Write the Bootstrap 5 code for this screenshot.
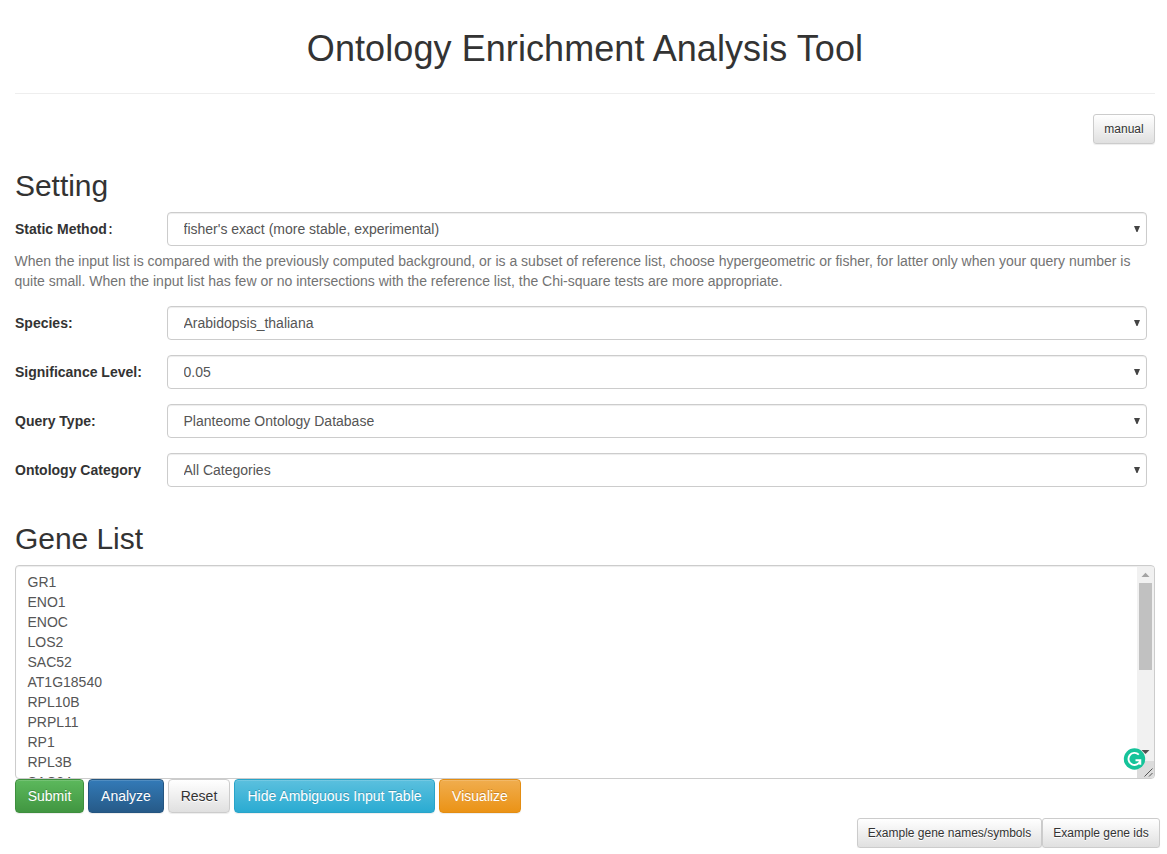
<!DOCTYPE html>
<html lang="en">
<head>
<meta charset="utf-8">
<title>Ontology Enrichment Analysis Tool</title>
<link href="https://cdn.jsdelivr.net/npm/bootstrap@5.3.0/dist/css/bootstrap.min.css" rel="stylesheet">
<style>
body{font-family:"Liberation Sans","Noto Sans CJK SC",sans-serif;font-size:14px;line-height:20px;color:#333;overflow:hidden}
.page{width:1140px;margin-left:15px}
.page-title{font-size:36px;line-height:40px;letter-spacing:.08px;padding:29px 0 24px;border-bottom:1px solid #eee;margin:0 0 20px}
.section-title{font-size:30px;line-height:33px;margin:25px 0 10px;letter-spacing:-.05px}
.section-title.genes{margin-top:35px}
.setting-row{height:34px;margin-bottom:15px}
.setting-row label{width:152px;font-weight:700}
.wide-colon{font-size:11px;line-height:1;margin-left:1px}
.setting-row .form-select{width:980px;height:34px;padding:6px 15.5px;font-size:14px;line-height:20px;color:#555;border:1px solid #ccc;border-radius:4px;box-shadow:inset 0 1px 1px rgba(0,0,0,.075);background:#fff url("data:image/svg+xml,%3Csvg xmlns='http://www.w3.org/2000/svg' width='6' height='6'%3E%3Cpath d='M0 0h6L3.5 6h-1z' fill='%23444'/%3E%3C/svg%3E") no-repeat right 6px top 13px;background-size:6px 6px}
.hint{color:#737373;margin:-10px 0 15px -.5px}
.gene-box{height:214px;border:1px solid #ccc;border-radius:4px;box-shadow:inset 0 1px 1px rgba(0,0,0,.075);overflow:hidden}
.gene-text{padding:6px 11.5px;color:#555;white-space:pre;height:212px;overflow:hidden}
.overlay-svg{position:absolute;right:0;top:0}
.btn{font-size:14px;line-height:20px;padding:6px 0;border-radius:4px;text-shadow:0 -1px 0 rgba(0,0,0,.2);box-shadow:inset 0 1px 0 rgba(255,255,255,.15),0 1px 1px rgba(0,0,0,.075)}
.btn-sm{font-size:12px;line-height:18px;padding:5px 0;border-radius:3px}
.btn-success{background:linear-gradient(#5cb85c,#419641);border-color:#3e8f3e}
.btn-primary{background:linear-gradient(#337ab7,#265a88);border-color:#245580}
.btn-light{background:linear-gradient(#fff,#e0e0e0);border-color:#ccc;color:#333;text-shadow:0 1px 0 #fff}
.btn-info{background:linear-gradient(#5bc0de,#2aabd2);border-color:#28a4c9;color:#fff}
.btn-warning{background:linear-gradient(#f0ad4e,#eb9316);border-color:#e38d13;color:#fff}
.w-submit{width:69px}.w-analyze{width:76px}.w-reset{width:62px}.w-hide{width:201px}.w-vis{width:82px}
.w-manual{width:62px}.w-names{width:185px}.w-ids{width:118px}
.examples{margin:5px -5px 0 0}
</style>
</head>
<body>
<main class="page">
<h1 class="page-title text-center fw-normal">Ontology Enrichment Analysis Tool</h1>
<div class="d-flex justify-content-end"><button class="btn btn-light btn-sm w-manual">manual</button></div>
<h2 class="section-title fw-normal">Setting</h2>
<div class="setting-row d-flex align-items-center"><label for="method">Static Method<span class="wide-colon">：</span></label><select id="method" class="form-select"><option>fisher's exact (more stable, experimental)</option></select></div>
<p class="hint">When the input list is compared with the previously computed background, or is a subset of reference list, choose hypergeometric or fisher, for latter only when your query number is<br>quite small. When the input list has few or no intersections with the reference list, the Chi-square tests are more appropriate.</p>
<div class="setting-row d-flex align-items-center"><label for="species">Species:</label><select id="species" class="form-select"><option>Arabidopsis_thaliana</option></select></div>
<div class="setting-row d-flex align-items-center"><label for="level">Significance Level:</label><select id="level" class="form-select"><option>0.05</option></select></div>
<div class="setting-row d-flex align-items-center"><label for="query">Query Type:</label><select id="query" class="form-select"><option>Planteome Ontology Database</option></select></div>
<div class="setting-row d-flex align-items-center"><label for="category">Ontology Category</label><select id="category" class="form-select"><option>All Categories</option></select></div>
<h2 class="section-title genes fw-normal">Gene List</h2>
<div class="gene-box position-relative"><div class="gene-text">GR1
ENO1
ENOC
LOS2
SAC52
AT1G18540
RPL10B
PRPL11
RP1
RPL3B
SAC24</div>
<svg class="overlay-svg" width="32" height="212" viewBox="0 0 32 212">
<path d="M15 1h17v194H15z" fill="#f1f1f1"/><path d="M15 195h17v17H15z" fill="#dcdcdc"/>
<path d="M17 17h13v87H17z" fill="#c1c1c1"/><path d="M19.500 11l4-4.300 4 4.300z" fill="#a3a3a3"/>
<path d="M19.500 184h8l-4 4z" fill="#505050"/>
<path d="M22.500 210.500l8-8M27 210.500l3.500-3.500" stroke="#555" stroke-width="1" fill="none"/>
<circle cx="12.500" cy="193" r="10.700" fill="#15c39a"/>
<path d="M16.800 188.700A6 6 0 1 0 18.300 194.500M13.500 194.300H18.300V198.800" fill="none" stroke="#fff" stroke-width="1.900"/>
</svg></div>
<div class="d-flex gap-1">
<button class="btn btn-success w-submit">Submit</button><button class="btn btn-primary w-analyze">Analyze</button><button class="btn btn-light w-reset">Reset</button><button class="btn btn-info w-hide">Hide Ambiguous Input Table</button><button class="btn btn-warning w-vis">Visualize</button>
</div>
<div class="examples d-flex justify-content-end"><button class="btn btn-light btn-sm w-names">Example gene names/symbols</button><button class="btn btn-light btn-sm w-ids">Example gene ids</button></div>
</main>
<script src="https://cdn.jsdelivr.net/npm/bootstrap@5.3.0/dist/js/bootstrap.bundle.min.js"></script>
</body>
</html>
